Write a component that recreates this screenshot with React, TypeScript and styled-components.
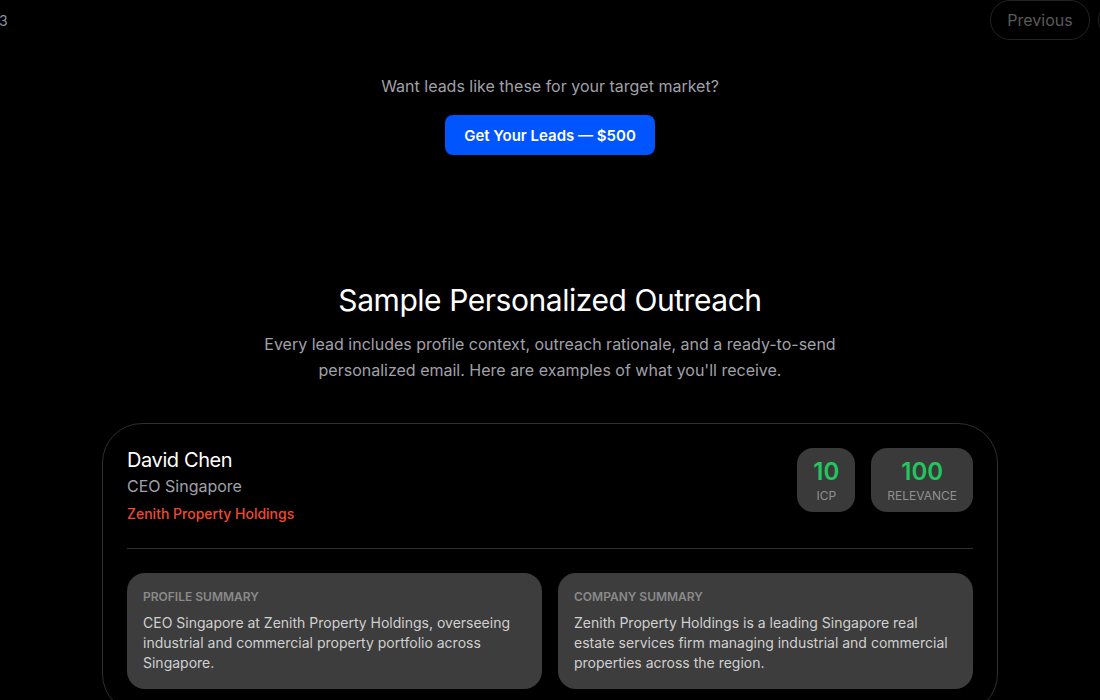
import * as React from "react";
import styled, { createGlobalStyle } from "styled-components";

const lead = {
  name: "David Chen",
  title: "CEO Singapore",
  company: "Zenith Property Holdings",
  scores: [
    { value: "10", label: "ICP" },
    { value: "100", label: "Relevance" },
  ],
  summaries: [
    {
      label: "Profile Summary",
      text: "CEO Singapore at Zenith Property Holdings, overseeing industrial and commercial property portfolio across Singapore.",
    },
    {
      label: "Company Summary",
      text: "Zenith Property Holdings is a leading Singapore real estate services firm managing industrial and commercial properties across the region.",
    },
  ],
};

export default function App() {
  return (
    <>
      <GlobalStyle />
      <Page>
        <TopBar>
          <Counter>3</Counter>
          <NavGroup>
            <NavButton>Previous</NavButton>
            <NavButton>Next</NavButton>
          </NavGroup>
        </TopBar>

        <Cta>
          <CtaText>Want leads like these for your target market?</CtaText>
          <CtaButton>Get Your Leads — $500</CtaButton>
        </Cta>

        <Section>
          <Heading>Sample Personalized Outreach</Heading>
          <Intro>
            Every lead includes profile context, outreach rationale, and a ready-to-send
            personalized email. Here are examples of what you'll receive.
          </Intro>

          <Card>
            <CardHeader>
              <Person>
                <Name>{lead.name}</Name>
                <Title>{lead.title}</Title>
                <Company>{lead.company}</Company>
              </Person>
              <Scores>
                {lead.scores.map((s) => (
                  <Score key={s.label}>
                    <ScoreValue>{s.value}</ScoreValue>
                    <ScoreLabel>{s.label}</ScoreLabel>
                  </Score>
                ))}
              </Scores>
            </CardHeader>
            <Divider />
            <Summaries>
              {lead.summaries.map((s) => (
                <Summary key={s.label}>
                  <SummaryLabel>{s.label}</SummaryLabel>
                  <SummaryText>{s.text}</SummaryText>
                </Summary>
              ))}
            </Summaries>
          </Card>
        </Section>
      </Page>
    </>
  );
}

const GlobalStyle = createGlobalStyle`
  html, body {
    margin: 0;
    padding: 0;
    background: #000;
    overflow: hidden;
  }
  body {
    font-family: Inter, "Liberation Sans", sans-serif;
    color: #fff;
  }
`;

const Page = styled.div`
  width: 1100px;
  height: 700px;
  overflow: hidden;
  background: #000;
`;

const TopBar = styled.div`
  display: flex;
  justify-content: space-between;
  align-items: center;
  height: 40px;
`;

const Counter = styled.span`
  font-size: 14px;
  color: #8b93a3;
  margin-left: -1px;
`;

const NavGroup = styled.div`
  display: flex;
  gap: 8px;
  margin-right: -67px;
`;

const NavButton = styled.button`
  height: 40px;
  padding: 0 16px;
  border-radius: 999px;
  border: 1px solid #222;
  background: transparent;
  color: #5a5a5a;
  font-family: Inter, "Liberation Sans", sans-serif;
  font-size: 16px;
`;

const Cta = styled.div`
  display: flex;
  flex-direction: column;
  align-items: center;
  padding-top: 34px;
`;

const CtaText = styled.p`
  margin: 0;
  font-size: 16px;
  line-height: 24px;
  color: #a1a1aa;
`;

const CtaButton = styled.button`
  margin-top: 17px;
  height: 40px;
  padding: 0 19px;
  border: none;
  border-radius: 8px;
  background: #0055ff;
  color: #fff;
  font-family: Inter, "Liberation Sans", sans-serif;
  font-size: 15px;
  font-weight: 600;
`;

const Section = styled.div`
  display: flex;
  flex-direction: column;
  align-items: center;
  padding-top: 127px;
`;

const Heading = styled.h2`
  margin: 0;
  font-size: 30px;
  line-height: 36px;
  font-weight: 400;
  letter-spacing: -0.015em;
  color: #fff;
`;

const Intro = styled.p`
  margin: 13px 0 0;
  max-width: 600px;
  text-align: center;
  font-size: 16px;
  line-height: 26px;
  color: #a1a1aa;
`;

const Card = styled.div`
  margin-top: 40px;
  width: 896px;
  box-sizing: border-box;
  padding: 24px;
  border: 1px solid #2e2e2e;
  border-radius: 40px;
  background: #000;
`;

const CardHeader = styled.div`
  display: flex;
  justify-content: space-between;
  align-items: flex-start;
`;

const Person = styled.div`
  display: flex;
  flex-direction: column;
`;

const Name = styled.div`
  font-size: 20px;
  line-height: 24px;
  letter-spacing: -0.02em;
  color: #fff;
`;

const Title = styled.div`
  margin-top: 2px;
  font-size: 16px;
  line-height: 24px;
  color: #a1a1aa;
`;

const Company = styled.div`
  margin-top: 6px;
  font-size: 14px;
  line-height: 20px;
  font-weight: 500;
  color: #f04a2e;
`;

const Scores = styled.div`
  display: flex;
  gap: 16px;
`;

const Score = styled.div`
  display: flex;
  flex-direction: column;
  align-items: center;
  padding: 8px 16px;
  border-radius: 16px;
  background: #3a3a3a;
`;

const ScoreValue = styled.div`
  font-size: 24px;
  line-height: 32px;
  font-weight: 600;
  color: #22c55e;
`;

const ScoreLabel = styled.div`
  font-size: 12px;
  line-height: 16px;
  text-transform: uppercase;
  color: #8f8f8f;
`;

const Divider = styled.hr`
  margin: 24px 0;
  border: none;
  border-top: 1px solid #2e2e2e;
`;

const Summaries = styled.div`
  display: grid;
  grid-template-columns: 1fr 1fr;
  gap: 16px;
`;

const Summary = styled.div`
  padding: 16px;
  border-radius: 18px;
  background: #3d3d3d;
`;

const SummaryLabel = styled.div`
  font-size: 12px;
  line-height: 16px;
  font-weight: 600;
  text-transform: uppercase;
  color: #8a8a8a;
`;

const SummaryText = styled.p`
  margin: 8px 0 0;
  font-size: 14px;
  line-height: 20px;
  color: #d0d0d0;
`;
